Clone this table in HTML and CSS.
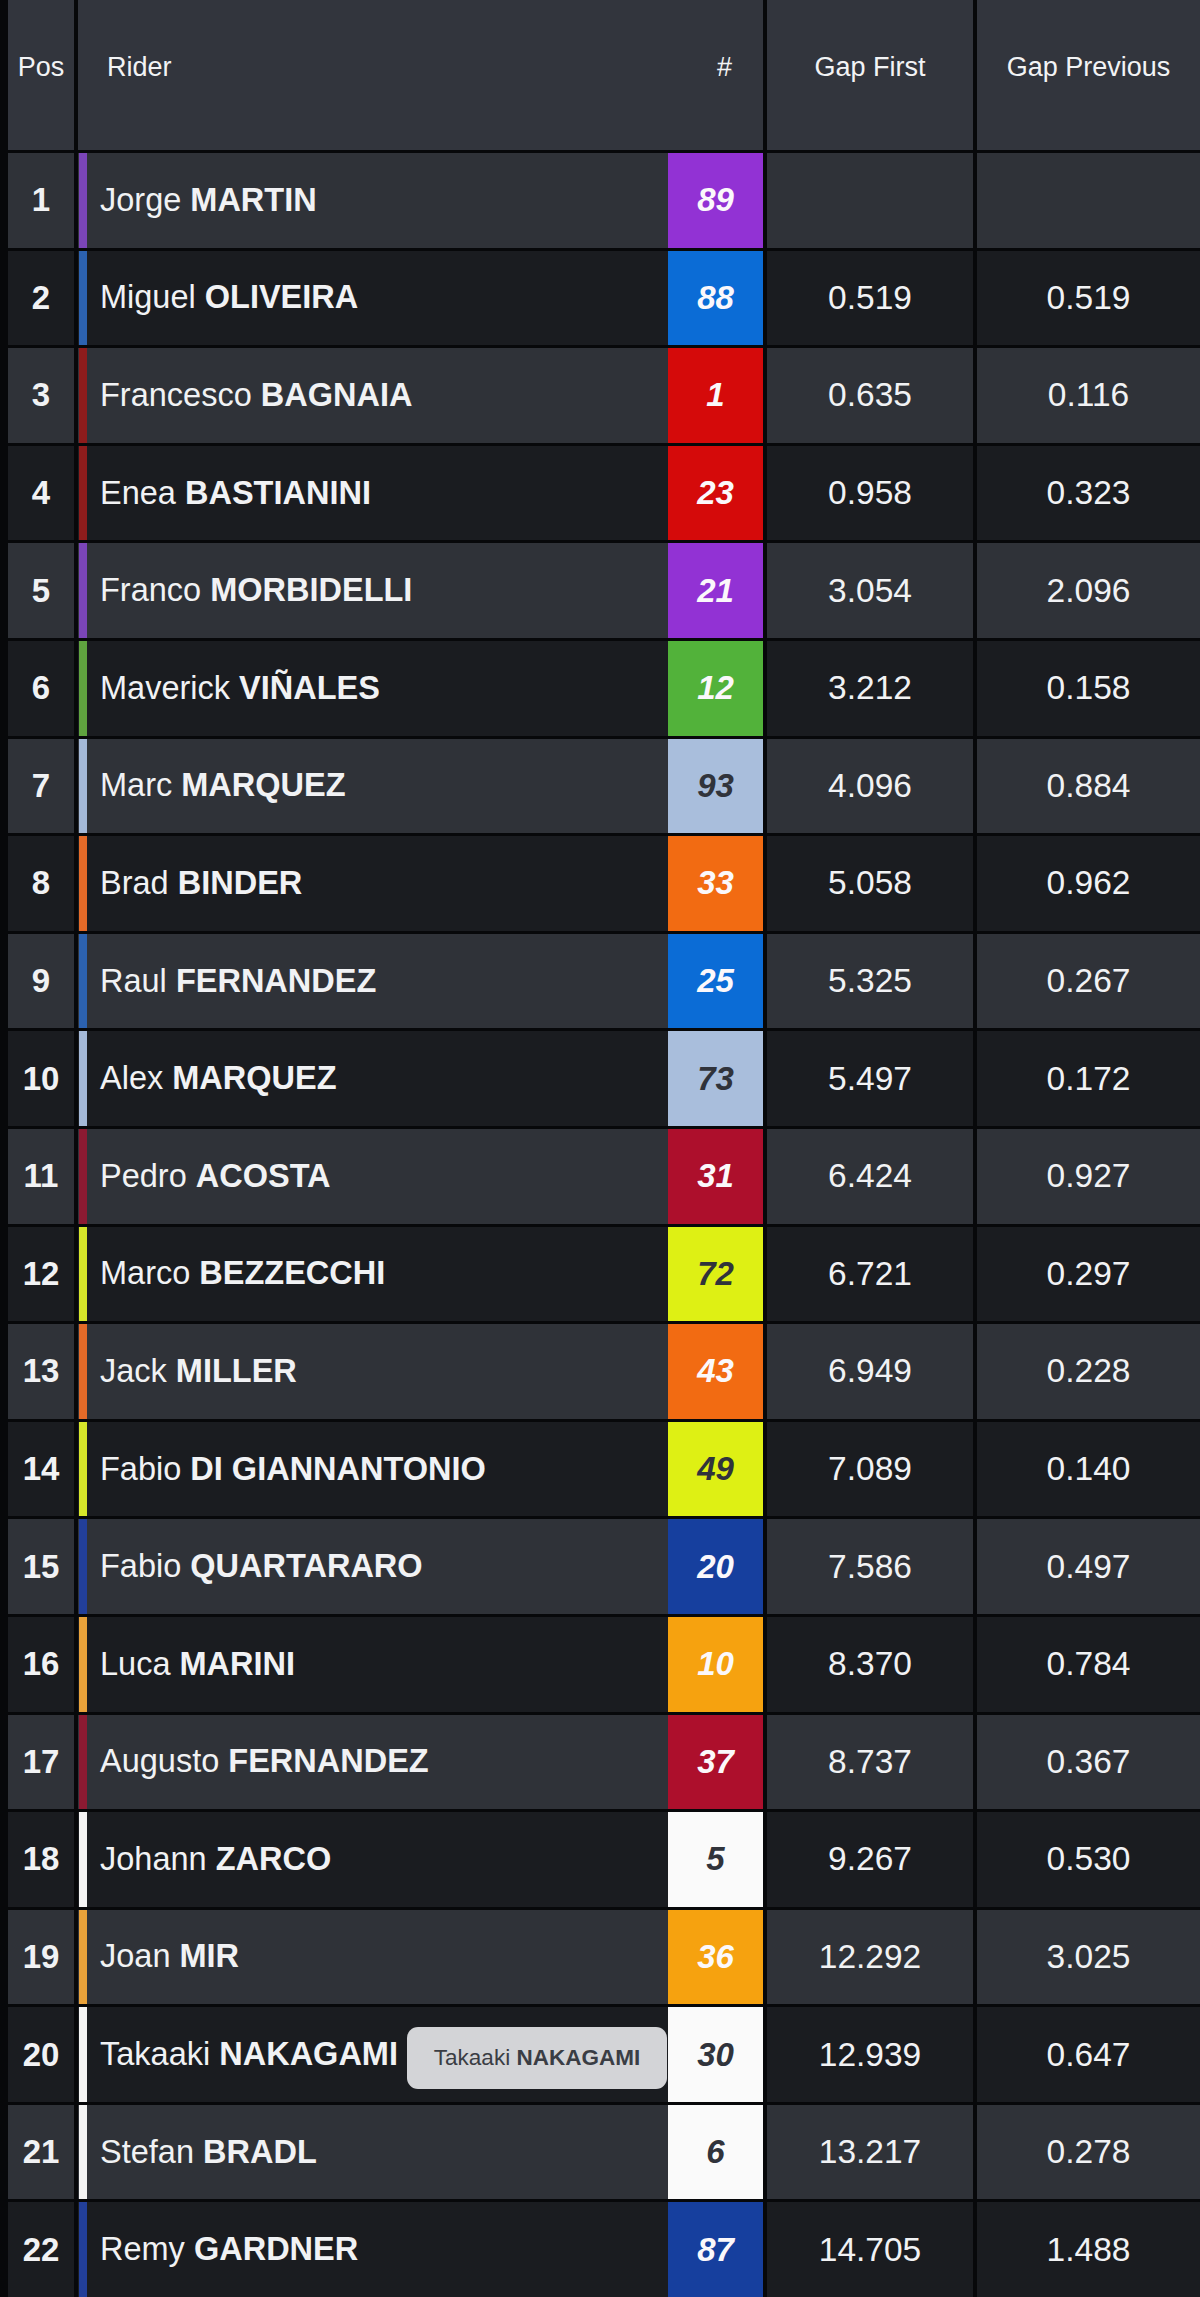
FILE: index.html
```html
<!DOCTYPE html>
<html lang="en">
<head>
<meta charset="utf-8">
<title>Results</title>
<link rel="stylesheet" href="styles.css">
</head>
<body>
<div class="table">
  <div class="head">
    <div class="hc hpos">Pos</div>
    <div class="hc hrider"><span class="hr-label">Rider</span><span class="hnum">#</span></div>
    <div class="hc hgap">Gap First</div>
    <div class="hc hgap">Gap Previous</div>
  </div>
  <div class="rows">
    <div class="row odd">
      <div class="pos">1</div>
      <div class="rider"><span class="stripe c-aprilia-p"></span><span class="name">Jorge <b>MARTIN</b></span><span class="num b-purple">89</span></div>
      <div class="gap"></div><div class="gap"></div>
    </div>
    <div class="row even">
      <div class="pos">2</div>
      <div class="rider"><span class="stripe c-blue"></span><span class="name">Miguel <b>OLIVEIRA</b></span><span class="num b-blue">88</span></div>
      <div class="gap">0.519</div><div class="gap">0.519</div>
    </div>
    <div class="row odd">
      <div class="pos">3</div>
      <div class="rider"><span class="stripe c-darkred"></span><span class="name">Francesco <b>BAGNAIA</b></span><span class="num b-red">1</span></div>
      <div class="gap">0.635</div><div class="gap">0.116</div>
    </div>
    <div class="row even">
      <div class="pos">4</div>
      <div class="rider"><span class="stripe c-darkred"></span><span class="name">Enea <b>BASTIANINI</b></span><span class="num b-red">23</span></div>
      <div class="gap">0.958</div><div class="gap">0.323</div>
    </div>
    <div class="row odd">
      <div class="pos">5</div>
      <div class="rider"><span class="stripe c-aprilia-p"></span><span class="name">Franco <b>MORBIDELLI</b></span><span class="num b-purple">21</span></div>
      <div class="gap">3.054</div><div class="gap">2.096</div>
    </div>
    <div class="row even">
      <div class="pos">6</div>
      <div class="rider"><span class="stripe c-green"></span><span class="name">Maverick <b>VIÑALES</b></span><span class="num b-green">12</span></div>
      <div class="gap">3.212</div><div class="gap">0.158</div>
    </div>
    <div class="row odd">
      <div class="pos">7</div>
      <div class="rider"><span class="stripe c-light"></span><span class="name">Marc <b>MARQUEZ</b></span><span class="num b-light dark">93</span></div>
      <div class="gap">4.096</div><div class="gap">0.884</div>
    </div>
    <div class="row even">
      <div class="pos">8</div>
      <div class="rider"><span class="stripe c-orange"></span><span class="name">Brad <b>BINDER</b></span><span class="num b-orange">33</span></div>
      <div class="gap">5.058</div><div class="gap">0.962</div>
    </div>
    <div class="row odd">
      <div class="pos">9</div>
      <div class="rider"><span class="stripe c-blue"></span><span class="name">Raul <b>FERNANDEZ</b></span><span class="num b-blue">25</span></div>
      <div class="gap">5.325</div><div class="gap">0.267</div>
    </div>
    <div class="row even">
      <div class="pos">10</div>
      <div class="rider"><span class="stripe c-light"></span><span class="name">Alex <b>MARQUEZ</b></span><span class="num b-light dark">73</span></div>
      <div class="gap">5.497</div><div class="gap">0.172</div>
    </div>
    <div class="row odd">
      <div class="pos">11</div>
      <div class="rider"><span class="stripe c-crimson"></span><span class="name">Pedro <b>ACOSTA</b></span><span class="num b-crimson">31</span></div>
      <div class="gap">6.424</div><div class="gap">0.927</div>
    </div>
    <div class="row even">
      <div class="pos">12</div>
      <div class="rider"><span class="stripe c-yellow"></span><span class="name">Marco <b>BEZZECCHI</b></span><span class="num b-yellow dark">72</span></div>
      <div class="gap">6.721</div><div class="gap">0.297</div>
    </div>
    <div class="row odd">
      <div class="pos">13</div>
      <div class="rider"><span class="stripe c-orange"></span><span class="name">Jack <b>MILLER</b></span><span class="num b-orange">43</span></div>
      <div class="gap">6.949</div><div class="gap">0.228</div>
    </div>
    <div class="row even">
      <div class="pos">14</div>
      <div class="rider"><span class="stripe c-yellow"></span><span class="name">Fabio <b>DI GIANNANTONIO</b></span><span class="num b-yellow dark">49</span></div>
      <div class="gap">7.089</div><div class="gap">0.140</div>
    </div>
    <div class="row odd">
      <div class="pos">15</div>
      <div class="rider"><span class="stripe c-navy"></span><span class="name">Fabio <b>QUARTARARO</b></span><span class="num b-navy">20</span></div>
      <div class="gap">7.586</div><div class="gap">0.497</div>
    </div>
    <div class="row even">
      <div class="pos">16</div>
      <div class="rider"><span class="stripe c-amber"></span><span class="name">Luca <b>MARINI</b></span><span class="num b-amber">10</span></div>
      <div class="gap">8.370</div><div class="gap">0.784</div>
    </div>
    <div class="row odd">
      <div class="pos">17</div>
      <div class="rider"><span class="stripe c-crimson"></span><span class="name">Augusto <b>FERNANDEZ</b></span><span class="num b-crimson">37</span></div>
      <div class="gap">8.737</div><div class="gap">0.367</div>
    </div>
    <div class="row even">
      <div class="pos">18</div>
      <div class="rider"><span class="stripe c-white"></span><span class="name">Johann <b>ZARCO</b></span><span class="num b-white dark">5</span></div>
      <div class="gap">9.267</div><div class="gap">0.530</div>
    </div>
    <div class="row odd">
      <div class="pos">19</div>
      <div class="rider"><span class="stripe c-amber"></span><span class="name">Joan <b>MIR</b></span><span class="num b-amber">36</span></div>
      <div class="gap">12.292</div><div class="gap">3.025</div>
    </div>
    <div class="row even">
      <div class="pos">20</div>
      <div class="rider"><span class="stripe c-white"></span><span class="name">Takaaki <b>NAKAGAMI</b></span><span class="num b-white dark">30</span><span class="tooltip"><span class="tip-text">Takaaki <b>NAKAGAMI</b></span></span></div>
      <div class="gap">12.939</div><div class="gap">0.647</div>
    </div>
    <div class="row odd">
      <div class="pos">21</div>
      <div class="rider"><span class="stripe c-white"></span><span class="name">Stefan <b>BRADL</b></span><span class="num b-white dark">6</span></div>
      <div class="gap">13.217</div><div class="gap">0.278</div>
    </div>
    <div class="row even">
      <div class="pos">22</div>
      <div class="rider"><span class="stripe c-navy"></span><span class="name">Remy <b>GARDNER</b></span><span class="num b-navy">87</span></div>
      <div class="gap">14.705</div><div class="gap">1.488</div>
    </div>
  </div>
</div>
</body>
</html>
```
FILE: styles.css
```css
html, body {
  margin: 0;
  padding: 0;
  background: #07080a;
}
body {
  width: 1200px;
  height: 2297px;
  overflow: hidden;
  font-family: "Liberation Sans", Arial, sans-serif;
  color: #f1f2f4;
}
.table {
  padding-left: 8px;
  display: flex;
  flex-direction: column;
  gap: 3px;
}
.head, .row {
  display: grid;
  grid-template-columns: 66px 685px 206px 1fr;
  column-gap: 4px;
}
.head {
  height: 150px;
}
.hc {
  background: #32353d;
  display: flex;
  align-items: center;
  padding-bottom: 16px;
  box-sizing: border-box;
  font-size: 27px;
  color: #f2f3f5;
}
.hpos { justify-content: center; }
.hrider { padding-left: 29px; }
.hr-label { flex: 1; }
.hnum { width: 95px; text-align: center; padding-left: 18px; box-sizing: border-box; }
.hgap { justify-content: center; }

.rows {
  display: flex;
  flex-direction: column;
  gap: 3px;
}
.row {
  height: 94.6px;
}
.row > div {
  display: flex;
  align-items: center;
}
.odd > div { background: #2f3238; }
.even > div { background: #1a1c20; }
.pos {
  justify-content: center;
  font-size: 33px;
  font-weight: bold;
}
.rider {
  position: relative;
}
.stripe {
  align-self: stretch;
  width: 8px;
  margin-left: 1px;
}
.name {
  flex: 1;
  padding-left: 13px;
  font-size: 32.5px;
  white-space: nowrap;
}
.name b { font-weight: bold; }
.num {
  align-self: stretch;
  width: 95px;
  display: flex;
  align-items: center;
  justify-content: center;
  font-size: 33px;
  font-weight: bold;
  font-style: italic;
  color: #fbf8fb;
}
.num.dark { color: #30333b; }
.gap {
  justify-content: center;
  font-size: 33.5px;
}
.tooltip {
  position: absolute;
  right: 96px;
  top: 20px;
  width: 260px;
  height: 62px;
  border-radius: 11px;
  background: #d3d4d7;
  color: #3a3d44;
  display: flex;
  align-items: center;
  justify-content: center;
}
.tip-text {
  font-size: 22.5px;
  white-space: nowrap;
}

/* stripe colours */
.c-aprilia-p { background: #7b45b8; }
.c-blue { background: #2c62b0; }
.c-darkred { background: #8e1c1c; }
.c-green { background: #5fa33f; }
.c-light { background: #a4b9d8; }
.c-orange { background: #e46a28; }
.c-crimson { background: #8c1a32; }
.c-yellow { background: #d6e62a; }
.c-navy { background: #223f9a; }
.c-amber { background: #e9a23a; }
.c-white { background: #f4f4f4; }

/* number box colours */
.b-purple { background: #9232d4; }
.b-blue { background: #0b6cd6; }
.b-red { background: #d50a0a; }
.b-green { background: #52b23a; }
.b-light { background: #a9bedc; }
.b-orange { background: #f26b12; }
.b-crimson { background: #ad0f2c; }
.b-yellow { background: #def014; }
.b-navy { background: #163f9e; }
.b-amber { background: #f6a20f; }
.b-white { background: #fafafa; }
```
